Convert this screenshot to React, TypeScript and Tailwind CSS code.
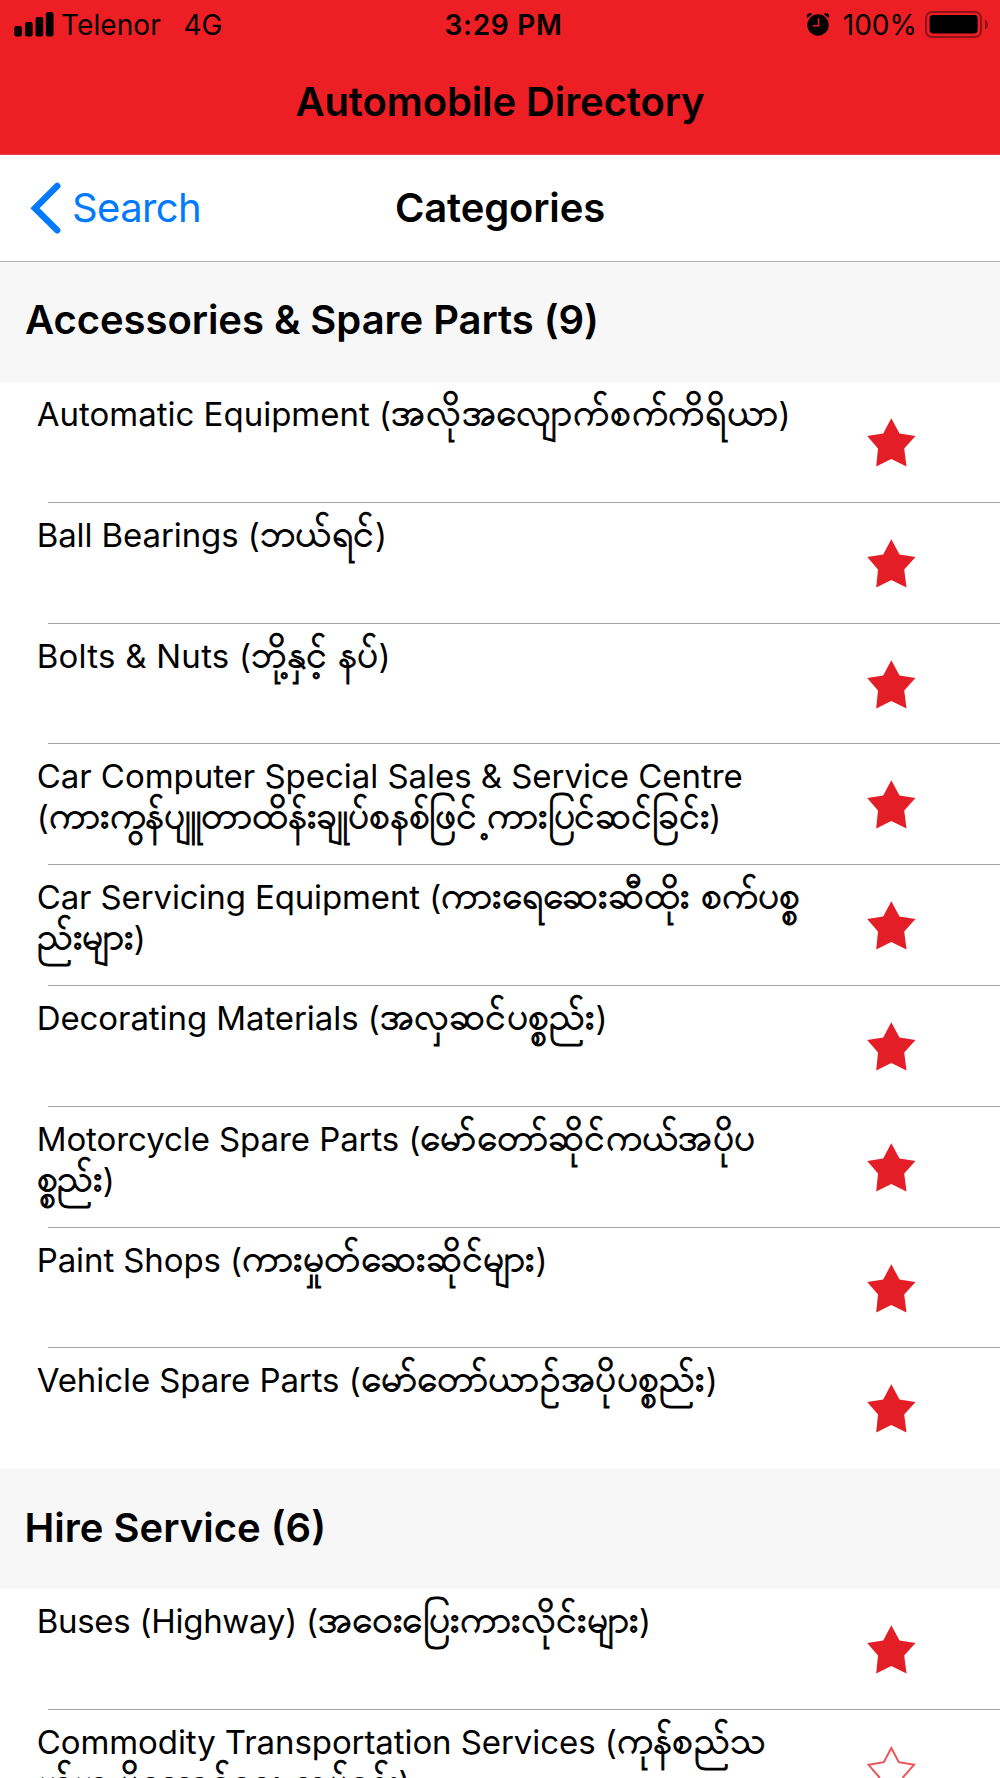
type Line = {
  latin?: string;
  latinClass?: string;
  burmese?: string;
  /** Continuation that begins with a detached dot-below mark. */
  detached?: string;
  burmeseClass?: string;
  close?: boolean;
};
type Category = { lines: Line[]; favourite: boolean };

const accessories: Category[] = [
  {
    favourite: true,
    lines: [
      { latin: "Automatic Equipment (", burmese: "အလိုအလျောက်စက်ကိရိယာ", burmeseClass: "tracking-[0.75px]", close: true },
    ],
  },
  {
    favourite: true,
    lines: [
      {
        latin: "Ball Bearings (",
        latinClass: "tracking-[-0.1px]",
        burmese: "ဘယ်ရင်",
        burmeseClass: "tracking-[0.6px]",
        close: true,
      },
    ],
  },
  {
    favourite: true,
    lines: [
      {
        latin: "Bolts & Nuts (",
        latinClass: "tracking-[0.25px]",
        burmese: "ဘို့နှင့် နပ်",
        burmeseClass: "tracking-[0.3px]",
        close: true,
      },
    ],
  },
  {
    favourite: true,
    lines: [
      { latin: "Car Computer Special Sales & Service Centre", latinClass: "tracking-[-0.04px]" },
      {
        latin: "(",
        burmese: "ကားကွန်ပျူတာထိန်းချုပ်စနစ်ဖြင်",
        detached: "\u00a0့ကားပြင်ဆင်ခြင်း",
        burmeseClass: "tracking-[-0.2px]",
        close: true,
      },
    ],
  },
  {
    favourite: true,
    lines: [
      {
        latin: "Car Servicing Equipment (",
        latinClass: "tracking-[-0.13px]",
        burmese: "ကားရေဆေးဆီထိုး စက်ပစ္စ",
        burmeseClass: "tracking-[0.1px]",
      },
      { burmese: "ည်းများ", burmeseClass: "tracking-[-0.5px]", close: true },
    ],
  },
  {
    favourite: true,
    lines: [
      {
        latin: "Decorating Materials (",
        latinClass: "tracking-[-0.08px]",
        burmese: "အလှဆင်ပစ္စည်း",
        burmeseClass: "tracking-[0.25px]",
        close: true,
      },
    ],
  },
  {
    favourite: true,
    lines: [
      {
        latin: "Motorcycle Spare Parts (",
        latinClass: "tracking-[-0.08px]",
        burmese: "မော်တော်ဆိုင်ကယ်အပိုပ",
        burmeseClass: "tracking-[0.35px]",
      },
      { burmese: "စ္စည်း", burmeseClass: "tracking-[-0.5px]", close: true },
    ],
  },
  {
    favourite: true,
    lines: [
      {
        latin: "Paint Shops (",
        latinClass: "tracking-[-0.1px]",
        burmese: "ကားမှုတ်ဆေးဆိုင်များ",
        burmeseClass: "tracking-[0.2px]",
        close: true,
      },
    ],
  },
  {
    favourite: true,
    lines: [
      {
        latin: "Vehicle Spare Parts (",
        latinClass: "tracking-[-0.08px]",
        burmese: "မော်တော်ယာဉ်အပိုပစ္စည်း",
        burmeseClass: "tracking-[0.35px]",
        close: true,
      },
    ],
  },
];

const hire: Category[] = [
  {
    favourite: true,
    lines: [
      {
        latin: "Buses (Highway) (",
        latinClass: "tracking-[-0.28px]",
        burmese: "အဝေးပြေးကားလိုင်းများ",
        burmeseClass: "tracking-[-0.1px]",
        close: true,
      },
    ],
  },
  {
    favourite: false,
    lines: [
      {
        latin: "Commodity Transportation Services (",
        latinClass: "tracking-[-0.08px]",
        burmese: "ကုန်စည်သ",
        burmeseClass: "tracking-[0.4px]",
      },
      { burmese: "ယ်ယူ ပို့ဆောင်ရေး လုပ်ငန်း", close: true },
    ],
  },
];

function Star({ filled }: { filled: boolean }) {
  return (
    <svg viewBox="0 0 49 49" className="mt-[36px] h-[49px] w-[49px] shrink-0">
      <path
        d={
          filled
            ? "M24.3 .3 32.5 15.6 48.5 18 37.2 30.6 39.5 48.5 24.3 41 9.2 48.5 11 30.6 .2 18 16.2 15.6Z"
            : "M24.3 2 31.8 16.2 47 18.8 36.2 31 38.3 47 24.3 39.7 10.3 47 12.2 31 1.5 18.8 16.8 16.2Z"
        }
        fill={filled ? "#e31e26" : "none"}
        stroke={filled ? "none" : "#ea545a"}
        strokeWidth="2"
      />
    </svg>
  );
}

function Row({ item, divider }: { item: Category; divider: boolean }) {
  return (
    <li className="relative flex h-[120.8px] shrink-0 pl-[36.7px]">
      <div className="w-[830.3px] shrink-0 pt-[12px] text-[33px] leading-[41px] whitespace-nowrap">
        {item.lines.map((line, i) => (
          <div key={i} className="h-[41px]">
            {line.latin && <span className={line.latinClass}>{line.latin}</span>}
            {line.burmese && (
              <span className={line.burmeseClass}>
                <span className="align-[1.3px] text-[37px] leading-[0] [-webkit-text-stroke:0.95px_#000]">
                  {line.burmese}
                  {line.detached && <span className="-ml-[4px]">{line.detached}</span>}
                </span>
              </span>
            )}
            {line.close && ")"}
          </div>
        ))}
      </div>
      <Star filled={item.favourite} />
      {divider && <div className="absolute right-0 bottom-0 left-[48px] h-px bg-[#a3a3a3]" />}
    </li>
  );
}

function StatusBar() {
  return (
    <div className="grid h-[50px] grid-cols-3 text-[28px] leading-[51px]">
      <div className="flex pl-[14px]">
        <svg viewBox="0 0 40 50" className="h-[50px] w-[40px]">
          <rect x=".3" y="26" width="7.6" height="10.5" rx="2.3" />
          <rect x="11" y="22" width="7.6" height="14.5" rx="2.3" />
          <rect x="21.6" y="17" width="7.6" height="19.5" rx="2.3" />
          <rect x="31.9" y="12" width="7.6" height="24.5" rx="2.3" />
        </svg>
        <span className="ml-[7px] tracking-[0.1px]">Telenor</span>
        <span className="ml-[22.5px]">4G</span>
      </div>
      <div className="pl-[7px] text-center font-semibold tracking-[0.7px]">3:29 PM</div>
      <div className="flex justify-end pr-[11px]">
        <svg viewBox="0 0 24 50" className="h-[50px] w-[24px]">
          <circle cx="12" cy="25" r="10.7" />
          <path d="M.9 17.5C.2 14.5 2 12.9 5.4 13.3L6 14.2 2 17.6ZM23.1 17.5C23.8 14.5 22 12.9 18.6 13.3L18 14.2 22 17.6Z" />
          <path d="M12.6 18.3V25.7H6.8" fill="none" stroke="#ee1e25" strokeWidth="1.6" />
        </svg>
        <span className="ml-[13px] mr-px">100%</span>
        <svg viewBox="0 0 64 50" className="ml-[7px] h-[50px] w-[64px]">
          <rect x="1" y="12" width="55" height="25" rx="6" fill="none" stroke="#8f1318" strokeWidth="2" />
          <rect x="4.6" y="15" width="48" height="18.4" rx="3.4" />
          <path d="M60 19.5Q63 21 63 24.5T60 29.5Z" fill="#8f1318" />
        </svg>
      </div>
    </div>
  );
}

export default function App() {
  return (
    <div className="flex h-[1778px] w-[1000px] flex-col overflow-hidden bg-white font-[Inter,sans-serif] text-black">
      <header className="h-[155px] shrink-0 border-b border-[#e2474c] bg-[#ee1e25]">
        <StatusBar />
        <h1 className="text-center text-[40px] leading-[103px] font-semibold tracking-[-0.1px]">Automobile Directory</h1>
      </header>
      <nav className="grid h-[107px] shrink-0 grid-cols-3 border-b border-[#b4b4b4] text-[40px] leading-[105px]">
        <a className="flex pl-[30px] text-[#007aff]">
          <svg viewBox="0 0 32 106" className="h-[106px] w-[32px]">
            <path d="M27.2 31 5 53.2 27.2 75.2" fill="none" stroke="#007aff" strokeWidth="6.5" strokeLinecap="round" />
          </svg>
          <span className="ml-[10px] tracking-[-0.6px]">Search</span>
        </a>
        <h2 className="text-center font-semibold tracking-[-0.15px]">Categories</h2>
      </nav>
      <h3 className="h-[120px] shrink-0 bg-[#f7f7f7] pl-[25px] text-[40px] leading-[115px] font-semibold tracking-[-0.05px]">
        Accessories &amp; Spare Parts (9)
      </h3>
      <ul className="shrink-0">
        {accessories.map((item, i) => (
          <Row key={i} item={item} divider={i < accessories.length - 1} />
        ))}
      </ul>
      <h3 className="h-[120.3px] shrink-0 bg-[#f7f7f7] pl-[24.5px] text-[40px] leading-[117px] font-semibold">
        Hire Service (6)
      </h3>
      <ul className="shrink-0">
        {hire.map((item, i) => (
          <Row key={i} item={item} divider />
        ))}
      </ul>
    </div>
  );
}
